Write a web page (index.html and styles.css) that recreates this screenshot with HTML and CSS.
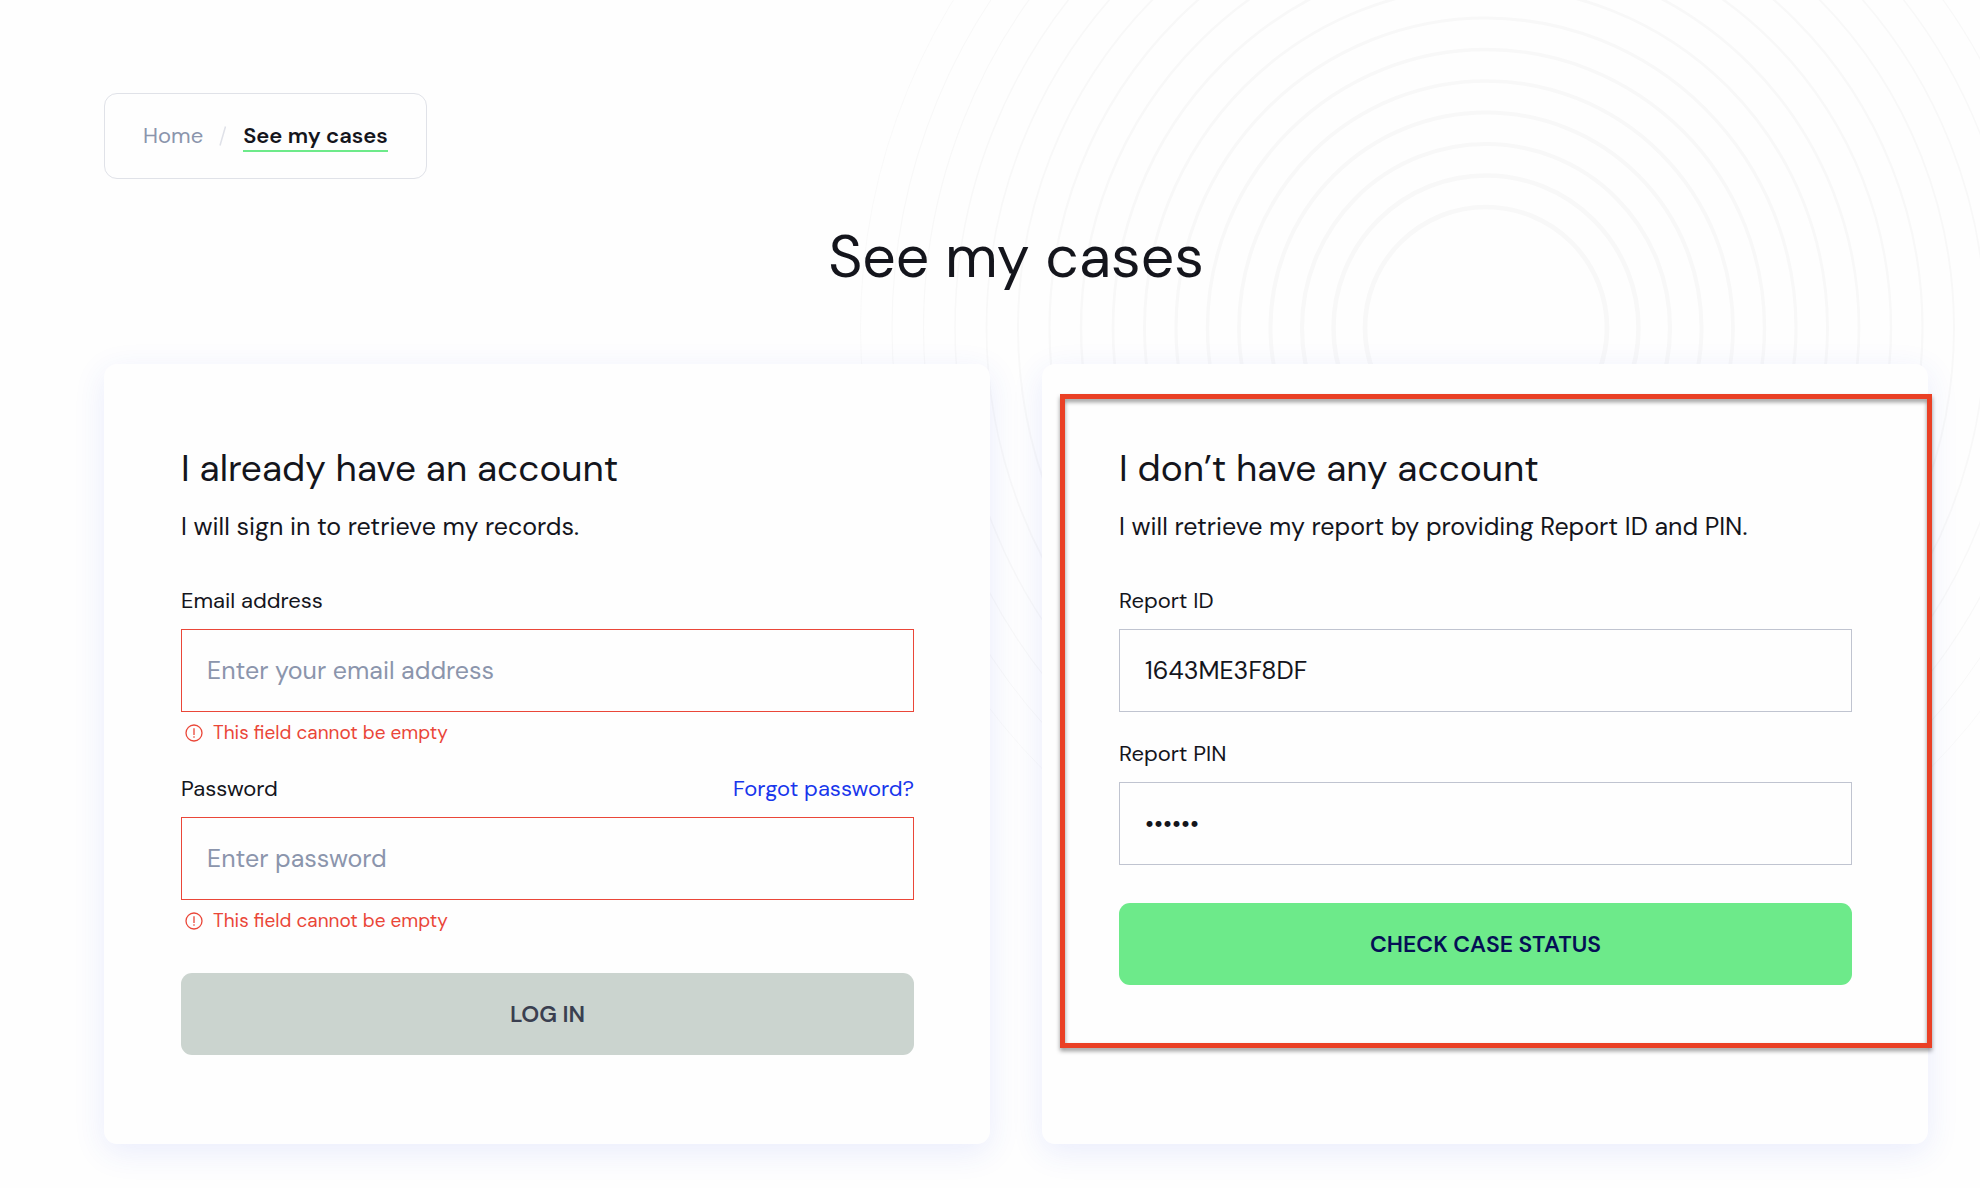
FILE: index.html
```html
<!DOCTYPE html>
<html lang="en">
<head>
  <meta charset="utf-8">
  <meta name="viewport" content="width=device-width, initial-scale=1">
  <title>See my cases</title>
  <link rel="stylesheet" href="styles.css">
</head>
<body>
  <div class="page">
    <div class="backdrop" aria-hidden="true">
      <svg class="rings" viewBox="-630 -630 1260 1260" fill="none" stroke="#f8f8f8">
        <circle r="121" stroke-width="4.7"/>
        <circle r="152.5" stroke-width="4.5"/>
        <circle r="184" stroke-width="4.2"/>
        <circle r="215.5" stroke-width="4"/>
        <circle r="247" stroke-width="3.7"/>
        <circle r="278.5" stroke-width="3.4"/>
        <circle r="310" stroke-width="3.2"/>
        <circle r="341.5" stroke-width="2.9"/>
        <circle r="373" stroke-width="2.7"/>
        <circle r="405" stroke-width="2.4"/>
        <circle r="436.5" stroke-width="2.2"/>
        <circle r="468" stroke-width="1.9"/>
        <circle r="499.5" stroke-width="1.7"/>
        <circle r="531" stroke-width="1.5"/>
        <circle r="562.5" stroke-width="1.2"/>
        <circle r="594" stroke-width="1"/>
        <circle r="625.5" stroke-width="0.8"/>
      </svg>
    </div>

    <nav class="breadcrumb" aria-label="Breadcrumb">
      <a class="breadcrumb-link" href="#">Home</a>
      <svg class="breadcrumb-slash" viewBox="0 0 8 20" aria-hidden="true"><path d="M1 19.500L6.500 0.500"/></svg>
      <a class="breadcrumb-current" href="#" aria-current="page">See my cases</a>
    </nav>

    <main>
      <h1 class="title">See my cases</h1>

      <div class="cards">
        <section class="card">
          <h2 class="card-title">I already have an account</h2>
          <p class="card-text">I will sign in to retrieve my records.</p>
          <form class="form">
            <div class="field">
              <div class="field-head"><label for="email">Email address</label></div>
              <input class="input input-invalid" id="email" type="email" placeholder="Enter your email address" aria-describedby="email-error">
              <p class="error" id="email-error">
                <svg class="error-icon" viewBox="0 0 18 18" aria-hidden="true"><circle cx="9" cy="9" r="8"/><path d="M9 4.200v6.800M9 12.300v1.500"/></svg>
                This field cannot be empty
              </p>
            </div>
            <div class="field">
              <div class="field-head"><label for="password">Password</label><a class="forgot" href="#">Forgot password?</a></div>
              <input class="input input-invalid" id="password" type="password" placeholder="Enter password" aria-describedby="password-error">
              <p class="error" id="password-error">
                <svg class="error-icon" viewBox="0 0 18 18" aria-hidden="true"><circle cx="9" cy="9" r="8"/><path d="M9 4.200v6.800M9 12.300v1.500"/></svg>
                This field cannot be empty
              </p>
            </div>
            <button class="button button-muted" type="button">LOG IN</button>
          </form>
        </section>

        <section class="card">
          <h2 class="card-title">I don’t have any account</h2>
          <p class="card-text">I will retrieve my report by providing Report ID and PIN.</p>
          <form class="form form-report">
            <div class="field">
              <div class="field-head"><label for="report-id">Report ID</label></div>
              <input class="input" id="report-id" type="text" value="1643ME3F8DF">
            </div>
            <div class="field">
              <div class="field-head"><label for="report-pin">Report PIN</label></div>
              <input class="input" id="report-pin" type="password" value="482915">
            </div>
            <button class="button" type="button">CHECK CASE STATUS</button>
          </form>
          <div class="highlight" aria-hidden="true"></div>
        </section>
      </div>
    </main>
  </div>
</body>
</html>
```
FILE: styles.css
```css
*, *::before, *::after { box-sizing: border-box; }

body {
  margin: 0;
  background: #fefefe;
  color: #14151c;
  font-family: "DM Sans", Inter, "Liberation Sans", sans-serif;
  font-size: 22px;
  line-height: 32px;
}

h1, h2, p { margin: 0; font-weight: 400; }
a { text-decoration: none; }

.page {
  position: relative;
  min-height: 100vh;
  padding: 93px 52px 42px 104px;
}

/* Concentric rings behind the content */
.backdrop {
  position: absolute;
  inset: 0;
  overflow: hidden;
  z-index: -1;
}
.rings {
  position: absolute;
  top: -302px;
  right: -136px;
  width: 1260px;
  height: 1260px;
}

.breadcrumb {
  display: inline-flex;
  align-items: flex-start;
  gap: 16px;
  padding: 28px 38px 26px;
  border: 1px solid #e0e2e8;
  border-radius: 13px;
  background: #fefefe;
  line-height: 28px;
  vertical-align: top;
}
.breadcrumb-link { color: #8b95ac; }
.breadcrumb-slash {
  width: 8px;
  height: 20px;
  margin-top: 4px;
  fill: none;
  stroke: #dfe1e8;
  stroke-width: 1.5;
}
.breadcrumb-current {
  color: #14151c;
  font-weight: 600;
  border-bottom: 2px solid #6dea8a;
}

.title {
  margin: 44px 0 73px;
  font-size: 59px;
  line-height: 68px;
  text-align: center;
}

.cards {
  display: grid;
  grid-template-columns: 1fr 1fr;
  gap: 52px;
}
.card {
  position: relative;
  padding: 77px 76px 89px 77px;
  border-radius: 13px;
  background: #fefefe;
  box-shadow: 0 8px 32px rgba(50, 80, 240, 0.1);
}
.card-title { font-size: 37px; line-height: 54px; }
.card-text { margin-top: 14px; font-size: 25px; line-height: 36px; }

.form { display: flex; flex-direction: column; gap: 28px; margin-top: 40px; }
.form-report { gap: 26px; }
.field-head { display: flex; justify-content: space-between; margin-bottom: 12px; }
.forgot { color: #1836ec; }

.input {
  display: block;
  width: 100%;
  height: 83px;
  padding: 0 25px;
  border: 1px solid #c0c4d0;
  border-radius: 0;
  background: #fefefe;
  color: #14151c;
  font: inherit;
  font-size: 25px;
}
.input::placeholder { color: #8b95ac; opacity: 1; }
.input-invalid { border-color: #ea4638; }

.error {
  display: flex;
  align-items: center;
  gap: 10px;
  margin-top: 9px;
  padding-left: 4px;
  color: #ea4638;
  font-size: 19px;
  line-height: 24px;
}
.error-icon {
  width: 18px;
  height: 18px;
  fill: none;
  stroke: currentColor;
  stroke-width: 1.3;
}

.button {
  height: 82px;
  margin-top: 12px;
  border: 0;
  border-radius: 11px;
  background: #6dea8a;
  color: #050f55;
  font: inherit;
  font-size: 23px;
  font-weight: 600;
}
.button-muted { background: #cbd4cf; color: #3a3f50; }

/* Callout frame over the report form */
.highlight {
  position: absolute;
  inset: 30px -4px 96px 18px;
  border: 5px solid #ea4025;
  filter: drop-shadow(0 3px 2px rgba(0, 0, 0, 0.4));
  pointer-events: none;
}
```
